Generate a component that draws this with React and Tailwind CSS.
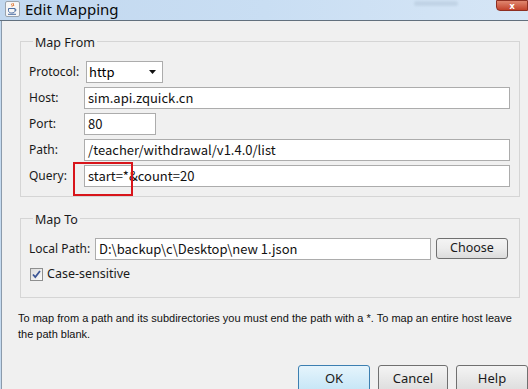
import React from "react";

const UI = { fontFamily: '"Noto Sans", "Open Sans", sans-serif' };
const FIELD = { fontFamily: '"Noto Sans CJK SC", "Noto Sans", sans-serif' };
const NOTE = { fontFamily: '"Liberation Sans", Arial, sans-serif' };

function JavaIcon() {
  return (
    <svg width="15" height="16" viewBox="0 0 15 16">
      <rect x="0.5" y="0.5" width="14" height="15" rx="1.5" fill="#f6f6f6" stroke="#9aa3ad" />
      <path d="M7 2.5c-1.5 1.2 1.2 1.8 0 3.2M8.5 2c-1.2 1 1 1.6 0 3" stroke="#e06a1c" strokeWidth="1" fill="none" />
      <path d="M3.5 7.5h6.5v2.2c0 1.5-1.3 2.3-3.2 2.3s-3.3-.8-3.3-2.3z" fill="none" stroke="#4d6fa3" strokeWidth="1" />
      <path d="M10 8.2c1.6-.2 1.6 1.8 0 1.6" fill="none" stroke="#4d6fa3" strokeWidth="0.9" />
      <path d="M3 13.3h8" stroke="#4d6fa3" strokeWidth="1" />
    </svg>
  );
}

function TextField({ value, className }) {
  return (
    <div
      className={`h-[22px] bg-white border border-[#acacac] flex items-center pl-[3px] text-[13px] text-[#111] whitespace-nowrap ${className}`}
      style={FIELD}
    >
      {value}
    </div>
  );
}

function Row({ label, children }) {
  return (
    <div className="flex items-center h-[22px]">
      <div className="w-[55px] text-[12px] text-[#1a1a1a] whitespace-nowrap">{label}</div>
      {children}
    </div>
  );
}

function Group({ title, children, className }) {
  return (
    <fieldset className={`border border-[#d5d5d5] ml-[18px] w-[500px] ${className}`}>
      <legend className="ml-[4px] px-[2px] text-[12.5px] leading-[16px] pt-[4px] text-[#1a1a1a]">{title}</legend>
      {children}
    </fieldset>
  );
}

export default function App() {
  return (
    <div className="w-[528px] h-[389px] overflow-hidden flex flex-col bg-[#f0f0f0]" style={UI}>
      {/* title bar */}
      <div className="h-[21px] shrink-0 flex items-start bg-gradient-to-r from-[#c2d8ef] via-[#c9def3] to-[#d6e6f6] border-b border-[#62707e]">
        <div className="ml-[5px] mt-[1px]">
          <JavaIcon />
        </div>
        <div className="ml-[5px] text-[15px] leading-[19px] text-[#0a0a0a]">Edit Mapping</div>
        <div className="flex-1" />
        <div className="mt-[1px] mr-[38px] w-[44px] h-[5px] rounded bg-[#b7cadd] opacity-60 blur-[1px]" />
        <div className="w-[32px] h-[11px] bg-gradient-to-b from-[#e0866f] to-[#c2412a] border border-[#8e2f22] rounded-bl-[4px] flex items-center justify-center">
          <span className="text-white text-[9px] font-bold leading-[9px]">x</span>
        </div>
      </div>

      <div className="flex-1 flex min-h-0">
        <div className="w-[3px] bg-[#c4daf0] border-r border-[#8b9aab] box-content" />
        <div className="flex-1 flex flex-col pt-[10px]">
          <Group title="Map From" className="pb-[9px] pl-[8px]">
            <div className="flex flex-col gap-[4px] mt-[10px]">
              <Row label="Protocol:">
                <div
                  className="ml-[2px] w-[77px] h-[22px] bg-white border border-[#acacac] flex items-center justify-between pl-[2px] pr-[6px] text-[13px]"
                  style={FIELD}
                >
                  <span>http</span>
                  <svg width="7" height="4" viewBox="0 0 7 4">
                    <path d="M0 0h7L3.5 4z" fill="#111" />
                  </svg>
                </div>
              </Row>
              <Row label="Host:">
                <TextField value="sim.api.zquick.cn" className="w-[426px]" />
              </Row>
              <Row label="Port:">
                <TextField value="80" className="w-[72px]" />
              </Row>
              <Row label="Path:">
                <TextField value="/teacher/withdrawal/v1.4.0/list" className="w-[426px]" />
              </Row>
              <div className="relative">
                <Row label="Query:">
                  <TextField value="start=*&count=20" className="w-[426px]" />
                </Row>
                <div className="absolute left-[44px] top-[-3px] w-[60px] h-[34px] border-2 border-[#d8151b]" />
              </div>
            </div>
          </Group>

          <Group title="Map To" className="mt-[11px] pb-[16px] pl-[8px]">
            <div className="flex items-center h-[21px] mt-[10px]">
              <div className="w-[66px] text-[12px] text-[#1a1a1a] whitespace-nowrap">Local Path:</div>
              <TextField value="D:\backup\c\Desktop\new 1.json" className="w-[336px] h-[21px]" />
              <button className="ml-[5px] w-[72px] h-[21px] rounded-[3px] border border-[#707070] bg-gradient-to-b from-[#f4f4f4] via-[#ececec] to-[#dcdcdc] text-[12.5px] text-[#1a1a1a] leading-none">
                Choose
              </button>
            </div>
            <div className="flex items-center mt-[8px] ml-[1px] h-[14px]">
              <div className="w-[13px] h-[13px] border border-[#8e8f8f] bg-gradient-to-br from-[#dcdcdc] to-[#fbfbfb] flex items-center justify-center">
                <svg width="9" height="9" viewBox="0 0 9 9">
                  <path d="M1 4.5l2.3 2.6L8 1" fill="none" stroke="#3d5796" strokeWidth="1.8" />
                </svg>
              </div>
              <span className="ml-[4px] text-[12.5px] text-[#1a1a1a] whitespace-nowrap">Case-sensitive</span>
            </div>
          </Group>

          <p className="ml-[16px] mt-[12px] text-[11px] leading-[16px] text-[#111] whitespace-nowrap" style={NOTE}>
            To map from a path and its subdirectories you must end the path with a *. To map an entire host leave
            <br />
            the path blank.
          </p>

          <div className="flex gap-[8px] pl-[296px] mt-auto mb-[-4px]">
            <button className="w-[72px] h-[28px] shrink-0 rounded-[3px] border border-[#3c7fb1] bg-gradient-to-b from-[#e5f4fc] to-[#c4e5f6] text-[13px] text-[#1a1a1a]">OK</button>
            <button className="w-[70px] h-[28px] shrink-0 rounded-[3px] border border-[#707070] bg-gradient-to-b from-[#f4f4f4] to-[#dcdcdc] text-[13px] text-[#1a1a1a]">Cancel</button>
            <button className="w-[72px] h-[28px] shrink-0 rounded-[3px] border border-[#707070] bg-gradient-to-b from-[#f4f4f4] to-[#dcdcdc] text-[13px] text-[#1a1a1a]">Help</button>
          </div>
        </div>
      </div>
    </div>
  );
}
